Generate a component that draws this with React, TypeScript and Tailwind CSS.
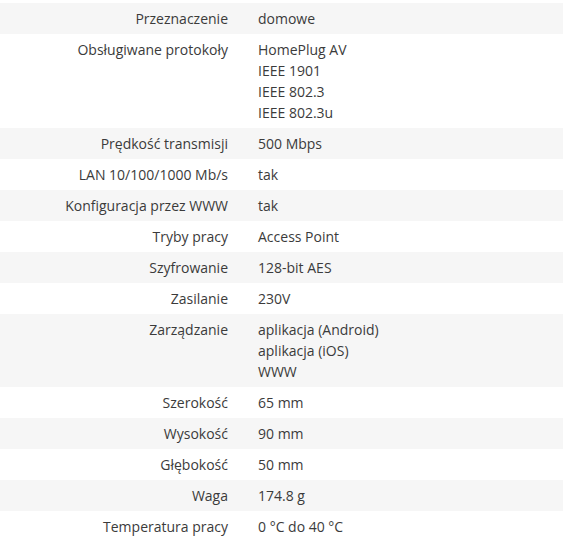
import React from "react";

const rows: [string, string[]][] = [
  ["Przeznaczenie", ["domowe"]],
  ["Obsługiwane protokoły", ["HomePlug AV", "IEEE 1901", "IEEE 802.3", "IEEE 802.3u"]],
  ["Prędkość transmisji", ["500 Mbps"]],
  ["LAN 10/100/1000 Mb/s", ["tak"]],
  ["Konfiguracja przez WWW", ["tak"]],
  ["Tryby pracy", ["Access Point"]],
  ["Szyfrowanie", ["128-bit AES"]],
  ["Zasilanie", ["230V"]],
  ["Zarządzanie", ["aplikacja (Android)", "aplikacja (iOS)", "WWW"]],
  ["Szerokość", ["65 mm"]],
  ["Wysokość", ["90 mm"]],
  ["Głębokość", ["50 mm"]],
  ["Waga", ["174.8 g"]],
  ["Temperatura pracy", ["0 °C do 40 °C"]],
];

export default function App() {
  return (
    <div
      className="w-[563px] h-[545px] bg-white pt-[3px] text-[14px] leading-[21px] text-[#3b3b3b]"
      style={{ fontFamily: '"Open Sans", "Liberation Sans", sans-serif' }}
    >
      {rows.map(([label, values], i) => (
        <div
          key={label}
          className={`flex py-[5px] ${i % 2 === 0 ? "bg-[#f6f6f6]" : "bg-white"}`}
        >
          <div className="w-[228px] shrink-0 text-right">{label}</div>
          <div className="pl-[30px] flex flex-col">
            {values.map((v) => (
              <div key={v}>{v}</div>
            ))}
          </div>
        </div>
      ))}
    </div>
  );
}
